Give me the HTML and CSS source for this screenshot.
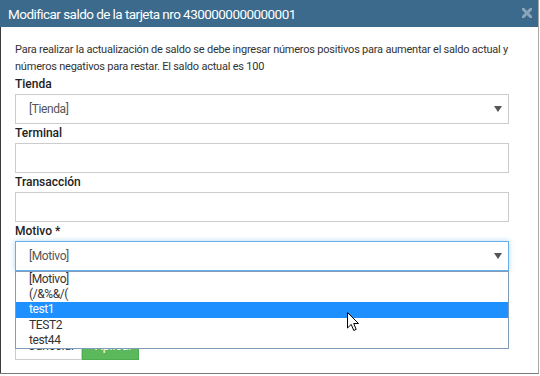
FILE: index.html
```html
<!DOCTYPE html>
<html lang="es">

<head>
    <meta charset="UTF-8">
    <title>Modificar saldo</title>
    <link rel="stylesheet" href="styles.css">
</head>

<body>
    <div class="modal">
        <header class="modal-header">
            <h1>Modificar saldo de la tarjeta nro 4300000000000001</h1>
            <span class="close" aria-label="Cerrar">
                <svg width="10" height="10" viewBox="0 0 10 10">
                    <path d="M1 1 L9 9 M9 1 L1 9" stroke="#8ba5ba" stroke-width="3" stroke-linecap="square" />
                </svg>
            </span>
        </header>

        <div class="modal-body">
            <p class="intro">Para realizar la actualización de saldo se debe ingresar números positivos para aumentar el saldo actual y números negativos para restar. El saldo actual es 100</p>

            <div class="field">
                <label>Tienda</label>
                <div class="select">
                    <span>[Tienda]</span>
                    <i class="caret"></i>
                </div>
            </div>

            <div class="field">
                <label>Terminal</label>
                <div class="input"></div>
            </div>

            <div class="field">
                <label>Transacción</label>
                <div class="input"></div>
            </div>

            <div class="field field-open">
                <label>Motivo *</label>
                <div class="select select-focus">
                    <span>[Motivo]</span>
                    <i class="caret"></i>
                </div>
                <ul class="options">
                    <li>[Motivo]</li>
                    <li>(/&amp;%&amp;/(</li>
                    <li class="selected">test1</li>
                    <li>TEST2</li>
                    <li>test44</li>
                </ul>
            </div>

            <div class="actions">
                <button class="btn btn-default">Cancelar</button>
                <button class="btn btn-success">Aplicar</button>
            </div>
        </div>
    </div>

    <svg class="cursor" width="13" height="20" viewBox="0 0 13 20">
        <path d="M0.5 0.5 L0.5 16 L4.2 12.4 L6.8 18.5 L9.2 17.4 L6.7 11.5 L11.5 11.5 Z" fill="#fff" stroke="#000" stroke-width="1" stroke-linejoin="miter" />
    </svg>
</body>

</html>
```

FILE: styles.css
```css
* {
    box-sizing: border-box;
    margin: 0;
    padding: 0;
}

body {
    font-family: Roboto, 'Liberation Sans', sans-serif;
    background-color: #fff;
    color: #333;
    width: 540px;
    height: 376px;
    overflow: hidden;
    position: relative;
}

.modal {
    width: 539px;
    height: 374px;
    background-color: #fff;
    border-right: 1px solid #a8a8a8;
    border-bottom: 1px solid #7a7a7a;
}

.modal-header {
    height: 27px;
    background-color: #3b6a8c;
    display: flex;
    align-items: center;
    justify-content: space-between;
    padding: 0 6px 0 8px;
}

.modal-header h1 {
    font-size: 13.5px;
    font-weight: 400;
    color: #fff;
    letter-spacing: -0.55px;
}

.close {
    display: flex;
    margin-top: -1px;
}

.modal-body {
    height: 346px;
    border-left: 1px solid #3c3c3c;
    padding: 14px 29px 0 14px;
}

.intro {
    font-size: 11px;
    line-height: 17px;
    letter-spacing: -0.22px;
    color: #333;
}

.field {
    display: flex;
    flex-direction: column;
}

.field label {
    font-size: 12px;
    font-weight: 500;
    line-height: 19px;
    color: #222;
}

.input,
.select {
    height: 30px;
    border: 1px solid #ccc;
    background-color: #fff;
}

.select {
    display: flex;
    align-items: center;
    justify-content: space-between;
    padding: 0 6px 0 13px;
    font-size: 12px;
    letter-spacing: -0.4px;
    color: #555;
}

.select-focus {
    border-color: #66afe9;
    box-shadow: 0 0 5px rgba(102, 175, 233, 0.5);
}

.caret {
    width: 0;
    height: 0;
    border-left: 4px solid transparent;
    border-right: 4px solid transparent;
    border-top: 6px solid #555;
}

.field-open {
    position: relative;
}

.options {
    position: absolute;
    top: 49px;
    left: 0;
    right: 0;
    list-style: none;
    background-color: #fff;
    border: 1px solid #7f9db9;
    z-index: 2;
}

.options li {
    font-size: 12px;
    letter-spacing: -0.4px;
    line-height: 15.2px;
    padding-left: 13px;
    color: #333;
}

.options .selected {
    background-color: #1e90ff;
    color: #fff;
}

.actions {
    display: flex;
    margin-top: 61px;
}

.btn {
    font-family: inherit;
    font-size: 12px;
    height: 28px;
    padding: 0 12px;
    border: 1px solid #ccc;
}

.btn-default {
    background-color: #fff;
    color: #333;
    width: 67px;
}

.btn-success {
    background-color: #5cb85c;
    border-color: #4cae4c;
    color: #fff;
    width: 57px;
}

.cursor {
    position: absolute;
    left: 347px;
    top: 312px;
    z-index: 3;
}
```
